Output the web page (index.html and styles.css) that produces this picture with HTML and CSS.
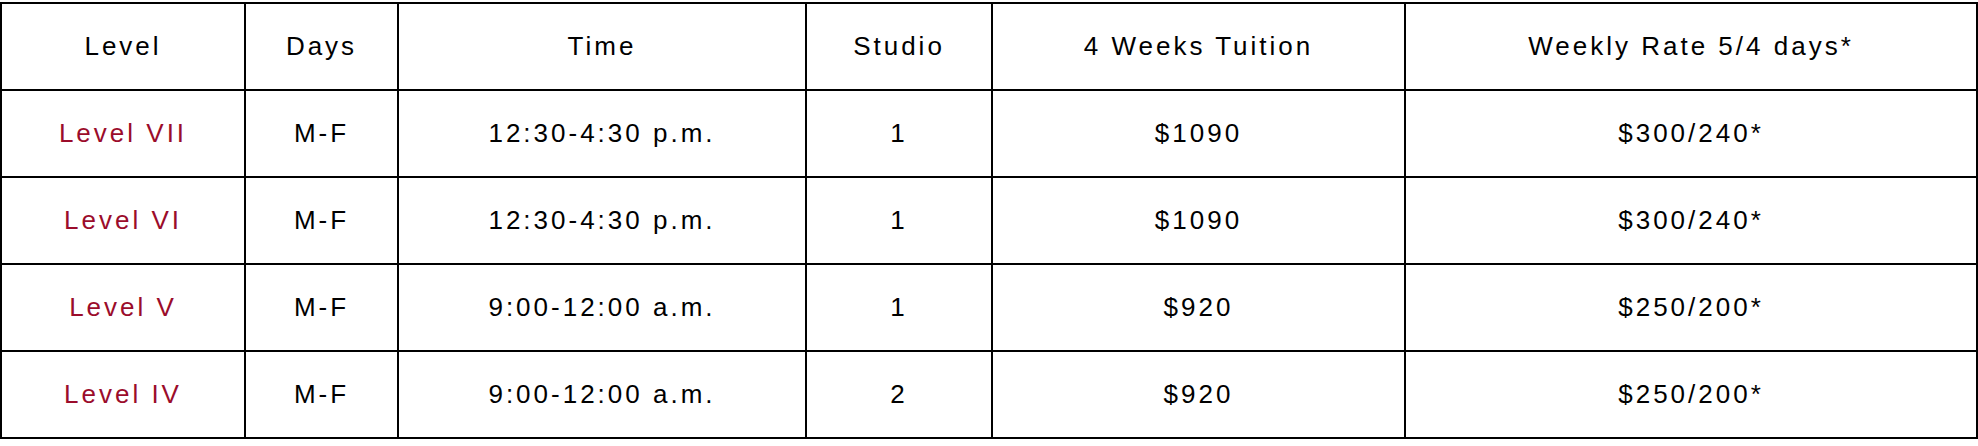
FILE: index.html
```html
<!DOCTYPE html>
<html>
<head>
<meta charset="utf-8">
<link rel="stylesheet" href="styles.css">
</head>
<body>
<table class="schedule">
  <colgroup>
    <col class="c-level">
    <col class="c-days">
    <col class="c-time">
    <col class="c-studio">
    <col class="c-tuition">
    <col class="c-rate">
  </colgroup>
  <thead>
    <tr>
      <th>Level</th>
      <th>Days</th>
      <th>Time</th>
      <th>Studio</th>
      <th>4 Weeks Tuition</th>
      <th>Weekly Rate 5/4 days*</th>
    </tr>
  </thead>
  <tbody>
    <tr>
      <td class="level">Level VII</td>
      <td>M-F</td>
      <td>12:30-4:30 p.m.</td>
      <td>1</td>
      <td>$1090</td>
      <td>$300/240*</td>
    </tr>
    <tr>
      <td class="level">Level VI</td>
      <td>M-F</td>
      <td>12:30-4:30 p.m.</td>
      <td>1</td>
      <td>$1090</td>
      <td>$300/240*</td>
    </tr>
    <tr>
      <td class="level">Level V</td>
      <td>M-F</td>
      <td>9:00-12:00 a.m.</td>
      <td>1</td>
      <td>$920</td>
      <td>$250/200*</td>
    </tr>
    <tr>
      <td class="level">Level IV</td>
      <td>M-F</td>
      <td>9:00-12:00 a.m.</td>
      <td>2</td>
      <td>$920</td>
      <td>$250/200*</td>
    </tr>
  </tbody>
</table>
</body>
</html>
```
FILE: styles.css
```css
html, body {
  margin: 0;
  padding: 0;
  background: #ffffff;
}

body {
  padding-top: 2px;
}

.schedule {
  border-collapse: collapse;
  table-layout: fixed;
  width: 1976px;
  font-family: "Liberation Sans", Arial, sans-serif;
  font-size: 26px;
  letter-spacing: 3px;
  color: #000000;
}

.c-level { width: 244px; }
.c-days { width: 153px; }
.c-time { width: 408px; }
.c-studio { width: 186px; }
.c-tuition { width: 413px; }
.c-rate { width: 572px; }

.schedule th,
.schedule td {
  border: 2px solid #000000;
  height: 85px;
  padding: 0;
  text-align: center;
  vertical-align: middle;
  font-weight: normal;
  box-sizing: border-box;
}

.schedule tr {
  height: 87px;
}

.schedule td.level {
  color: #9b0c2b;
}
```
